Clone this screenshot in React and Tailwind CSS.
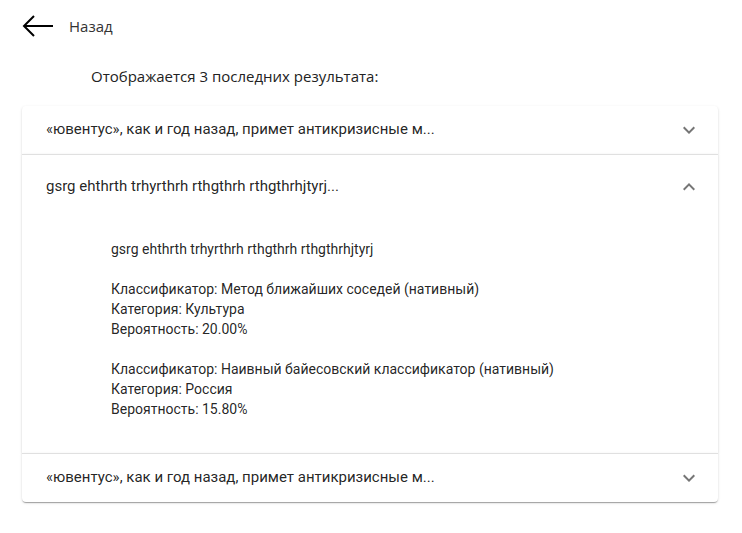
import React, { useState } from "react";

const items = [
  {
    title: "«ювентус», как и год назад, примет антикризисные м...",
    text: "«ювентус», как и год назад, примет антикризисные меры",
    results: [],
  },
  {
    title: "gsrg ehthrth trhyrthrh rthgthrh rthgthrhjtyrj...",
    text: "gsrg ehthrth trhyrthrh rthgthrh rthgthrhjtyrj",
    results: [
      { clf: "Метод ближайших соседей (нативный)", cat: "Культура", p: "20.00%" },
      { clf: "Наивный байесовский классификатор (нативный)", cat: "Россия", p: "15.80%" },
    ],
  },
  {
    title: "«ювентус», как и год назад, примет антикризисные м...",
    text: "«ювентус», как и год назад, примет антикризисные меры",
    results: [],
  },
];

const Chevron = ({ up }) => (
  <svg width="24" height="24" viewBox="0 0 24 24" className={up ? "rotate-180" : ""}>
    <path fill="rgba(0,0,0,0.54)" d="M16.59 8.59 12 13.17 7.41 8.59 6 10l6 6 6-6z" />
  </svg>
);

export default function App() {
  const [open, setOpen] = useState(1);

  return (
    <div className="min-h-screen bg-white font-['Roboto',sans-serif]">
      <div className="flex items-center gap-[15px] pl-[22px] pt-[14px]">
        <svg width="32" height="24" viewBox="0 0 32 24" fill="none" stroke="#000" strokeWidth="2">
          <path d="M31 12H2M12 2 2 12l10 10" />
        </svg>
        <span className="text-[15px] text-[#333] font-['Open_Sans',sans-serif]">Назад</span>
      </div>

      <p className="mt-[27px] pl-[91px] text-[15px] text-[#222] font-['Open_Sans',sans-serif]">
        Отображается 3 последних результата:
      </p>

      <div className="ml-[22px] mr-[24px] mt-[18px] flex flex-col">
        {items.map((it, i) => {
          const isOpen = open === i;
          return (
            <div
              key={i}
              className={`bg-white shadow-[0px_2px_1px_-1px_rgba(0,0,0,0.2),0px_1px_1px_0px_rgba(0,0,0,0.14),0px_1px_3px_0px_rgba(0,0,0,0.12)] ${
                i === 0 ? "rounded-t-[4px]" : "border-t border-[rgba(0,0,0,0.12)]"
              } ${i === items.length - 1 ? "rounded-b-[4px]" : ""}`}
            >
              <button
                onClick={() => setOpen(isOpen ? -1 : i)}
                className={`flex w-full items-center justify-between pl-[24px] pr-[17px] text-left ${
                  isOpen ? "h-[64px]" : "h-[48px]"
                }`}
              >
                <span className="text-[15px] text-[rgba(0,0,0,0.87)]">{it.title}</span>
                <Chevron up={isOpen} />
              </button>
              {isOpen && (
                <div className="pb-[34px] pl-[89px] pt-[20px] text-[14px] leading-[20px] text-[rgba(0,0,0,0.87)]">
                  <p>{it.text}</p>
                  {it.results.map((r, j) => (
                    <div key={j} className="mt-[20px]">
                      <p>Классификатор: {r.clf}</p>
                      <p>Категория: {r.cat}</p>
                      <p>Вероятность: {r.p}</p>
                    </div>
                  ))}
                </div>
              )}
            </div>
          );
        })}
      </div>
    </div>
  );
}
